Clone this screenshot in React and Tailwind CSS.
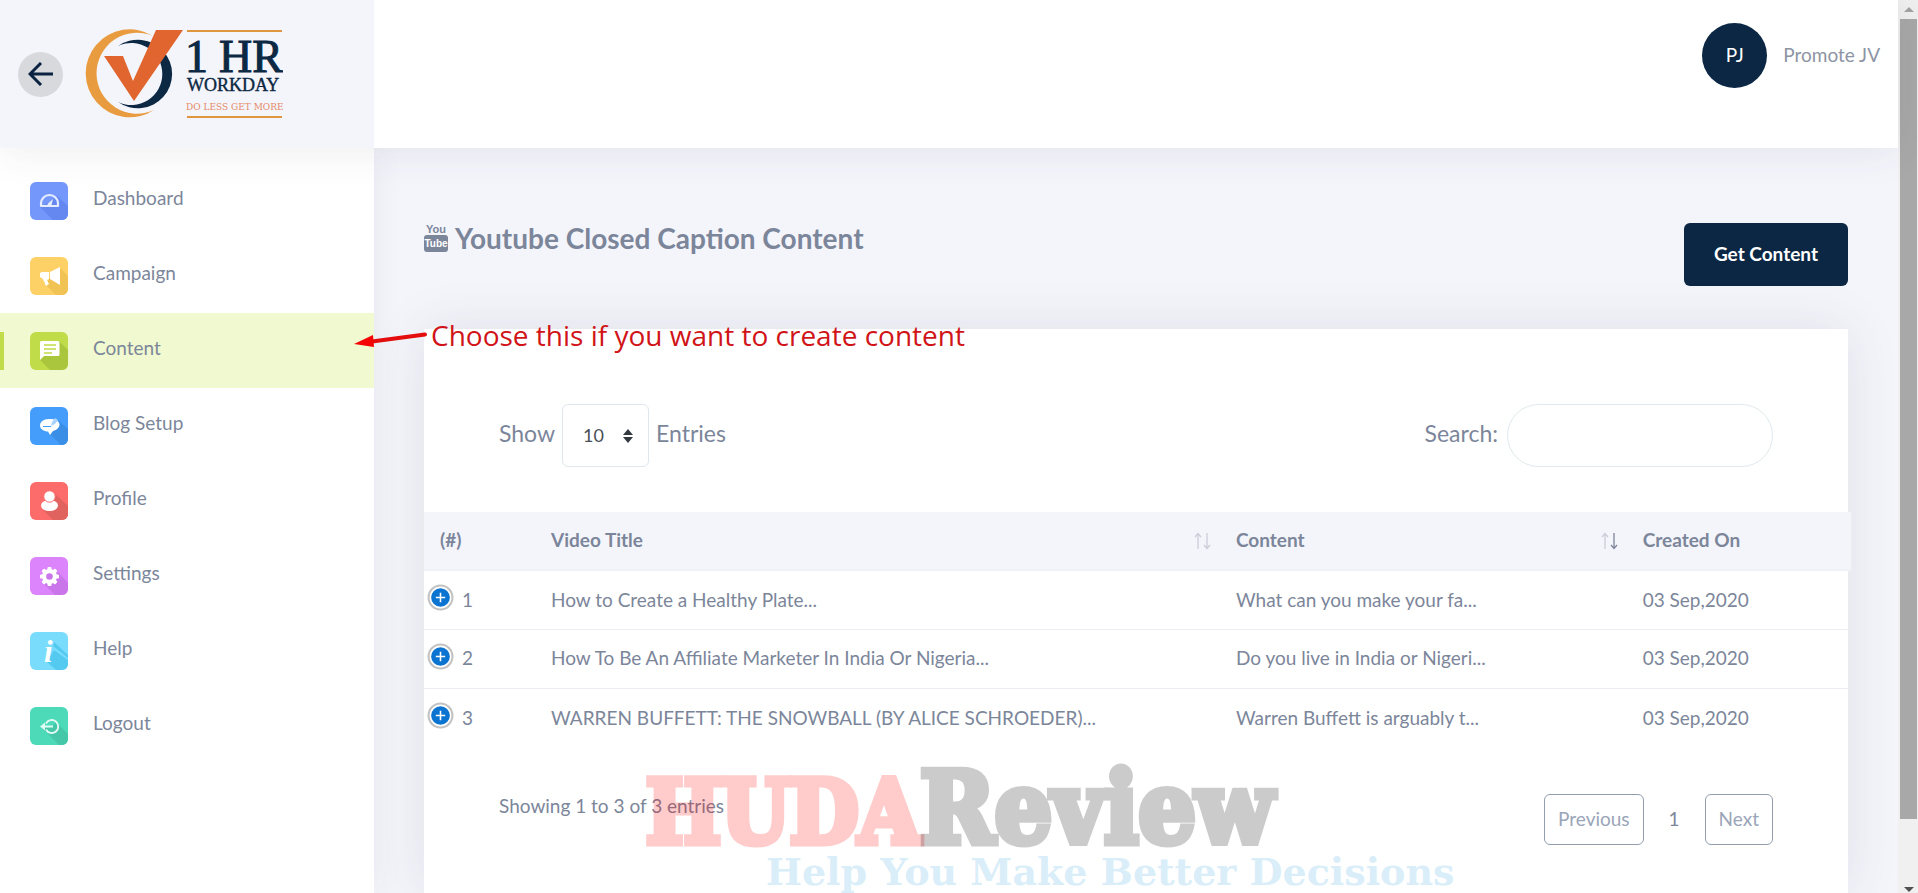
import React, { useState } from 'react';

const Logo = () => (
  <svg viewBox="0 0 198 90" className="w-[198px] h-[90px]" role="img" aria-label="1 HR Workday">
    <path d="M68 7 A44 44 0 1 0 69 81 A40.5 40.5 0 1 1 68 7Z" fill="#e99c3f" />
    <path d="M33 17 A34.3 34.3 0 1 1 33 73 A31 31 0 1 0 33 17Z" fill="#0c2843" />
    <path d="M19 27H38L48 52L71 1H98L49 72Z" fill="#e0652f" />
    <path d="M102 2H197M102 88H197" stroke="#e0953f" strokeWidth="2" />
    <g fontFamily="'Liberation Serif', serif" fill="#0c2843" stroke="#0c2843">
      <text x="100" y="43" fontSize="46" strokeWidth="1">1</text>
      <text x="134" y="43" fontSize="46" strokeWidth="1">HR</text>
      <text x="102" y="62" fontSize="18" strokeWidth="0.4">WORKDAY</text>
    </g>
    <text x="101" y="81" fontSize="9" fontFamily="'DejaVu Serif', serif" fill="#e58a68">DO LESS GET MORE</text>
  </svg>
);

// Rounded tile with a long shadow falling to the bottom right
const Tile = ({ bg, shade, shadow, children }) => (
  <svg viewBox="0 0 38 38" className="w-[38px] h-[38px] rounded-md shrink-0" aria-hidden="true">
    <rect width="38" height="38" fill={bg} />
    <path d={shadow} fill={shade} />
    {children}
  </svg>
);

const navItems = [
  {
    label: 'Dashboard',
    icon: (
      <Tile bg="#7397fb" shade="#6488ef" shadow="M10 25L23 38H38V24L27 14L20 20Z">
        <path d="M11 24V21.500A8.500 8.500 0 0 1 28 21.500V24Z" fill="none" stroke="#e6ecff" strokeWidth="2.200" strokeLinejoin="round" />
        <path d="M23 17L21.500 23A2 2 0 1 1 18.500 21Z" fill="#e6ecff" />
      </Tile>
    ),
  },
  {
    label: 'Campaign',
    icon: (
      <Tile bg="#fed166" shade="#f1c254" shadow="M16 28L26 38H38V19L29.500 10.500V27L20 20Z">
        <path d="M10 16L12 15H19V22L17 23L19 27L16 29L13 22L10 20Z" fill="#fff" />
        <path d="M20 15L30 10V28L20 22Z" fill="#fff" />
      </Tile>
    ),
  },
  {
    label: 'Content',
    icon: (
      <Tile bg="#c0dc48" shade="#aac63d" shadow="M10 28L20 38H38V18L29 9V24H14Z">
        <path d="M11.500 9H28A1.500 1.500 0 0 1 29.500 10.500V22.500A1.500 1.500 0 0 1 28 24H14L10 28V10.500A1.500 1.500 0 0 1 11.500 9Z" fill="#fff" />
        <path d="M14 13H26M14 17H26M14 21H22" stroke="#c0dc48" strokeWidth="1.400" />
      </Tile>
    ),
  },
  {
    label: 'Blog Setup',
    icon: (
      <Tile bg="#449dfb" shade="#3a8ee6" shadow="M20 27L31 38H38V22L29 14L24 23Z">
        <path d="M19 12C13 12 10 15 10 18.500S14 24.500 18 24.500L20 28L23 24C27 23 29.500 20.500 29.500 17.500C29.500 14 25 12 19 12Z" fill="#fff" />
        <path d="M13 19.500H21" stroke="#449dfb" strokeWidth="1.200" />
        <path d="M21 19L22 15L25 11L28 13L25 17Z" fill="#a9d2ff" />
      </Tile>
    ),
  },
  {
    label: 'Profile',
    icon: (
      <Tile bg="#fc6c6a" shade="#e06360" shadow="M13 28L23 38H38V24L25 12L20 20Z">
        <ellipse cx="19.500" cy="23.500" rx="8.500" ry="5.500" fill="#fff" />
        <circle cx="19.500" cy="14.500" r="5.700" fill="#fff" stroke="#fc6c6a" strokeWidth="1" />
      </Tile>
    ),
  },
  {
    label: 'Settings',
    icon: (
      <Tile bg="#dc84fb" shade="#ca76ea" shadow="M13 26L25 38H38V26L27 14L20 20Z">
        <circle cx="19.500" cy="19.500" r="7.400" fill="#fff" />
        <g fill="#fff">
          <rect x="17.500" y="10" width="4" height="19" rx="1" />
          <rect x="17.500" y="10" width="4" height="19" rx="1" transform="rotate(45 19.500 19.500)" />
          <rect x="17.500" y="10" width="4" height="19" rx="1" transform="rotate(90 19.500 19.500)" />
          <rect x="17.500" y="10" width="4" height="19" rx="1" transform="rotate(135 19.500 19.500)" />
        </g>
        <circle cx="19.500" cy="19.500" r="3.300" fill="#ca76ea" />
      </Tile>
    ),
  },
  {
    label: 'Help',
    icon: (
      <Tile bg="#79dcfd" shade="#55caf1" shadow="M17 30L26 38H38V28L24 18ZM24 10L38 23V26L23 14Z">
        <text x="14" y="30" fontSize="31" fontWeight="700" fontStyle="italic" fontFamily="'Liberation Serif', serif" fill="#fff">i</text>
      </Tile>
    ),
  },
  {
    label: 'Logout',
    icon: (
      <Tile bg="#4cdab9" shade="#45c7a8" shadow="M12 21L29 38H38V27L26 15L22 20Z">
        <path d="M16 16.500A6.500 6.500 0 1 1 16 22.500M13 19.500H23" fill="none" stroke="#e2faf4" strokeWidth="1.900" />
        <path d="M10 19.500L15 15.500V23.500Z" fill="#e2faf4" />
      </Tile>
    ),
  },
];

const rows = [
  { id: 1, title: 'How to Create a Healthy Plate...', content: 'What can you make your fa...', created: '03 Sep,2020' },
  { id: 2, title: 'How To Be An Affiliate Marketer In India Or Nigeria...', content: 'Do you live in India or Nigeri...', created: '03 Sep,2020' },
  { id: 3, title: 'WARREN BUFFETT: THE SNOWBALL (BY ALICE SCHROEDER)...', content: 'Warren Buffett is arguably t...', created: '03 Sep,2020' },
];

const SortArrows = ({ desc }) => (
  <svg viewBox="0 0 18 18" className="w-[18px] h-[18px]" fill="none" stroke="#7d8597" strokeWidth="1.300" aria-hidden="true">
    <path d="M4 17V2M1 5L4 1.500L7 5" opacity="0.35" />
    <path d="M13 1V16M10 13L13 16.500L16 13" opacity={desc ? 1 : 0.35} />
  </svg>
);

const YoutubeMark = () => (
  <svg viewBox="0 0 24 30" className="w-6 h-[30px]" fontFamily="'Liberation Sans Narrow', 'Liberation Sans', sans-serif" aria-hidden="true">
    <text x="12" y="10" fontSize="11" textAnchor="middle" fill="#7c869a">You</text>
    <rect y="12" width="24" height="17" rx="3" fill="#7c869a" />
    <text x="12" y="24" fontSize="10" textAnchor="middle" fill="#fff">Tube</text>
  </svg>
);

const Scrollbar = () => (
  <div className="w-5 shrink-0 flex flex-col bg-[#f0f0f0] pl-0.5 pr-px" aria-hidden="true">
    <div className="h-[19px] flex items-center justify-center">
      <svg viewBox="0 0 10 5" className="w-2.5 h-[5px]"><path d="M0 5L5 0L10 5Z" fill="#a3a3a3" /></svg>
    </div>
    <div className="grow-[16] basis-0 bg-[#a8a8a8]" />
    <div className="grow basis-0" />
    <div className="h-6 flex items-end justify-center pb-px">
      <svg viewBox="0 0 10 5" className="w-2.5 h-[5px]"><path d="M0 0L5 5L10 0Z" fill="#505050" /></svg>
    </div>
  </div>
);

const App = () => {
  const [active, setActive] = useState('Content');
  const [pageSize, setPageSize] = useState('10');
  const [query, setQuery] = useState('');

  const visible = rows.filter((r) => r.title.toLowerCase().includes(query.toLowerCase()));

  return (
    <div className="flex h-screen overflow-hidden bg-[#f4f5fb] text-[#7c869a] text-[19px] font-['Lato',sans-serif]">
      <div className="relative flex-1 min-w-0 flex flex-col">

        {/* Top bar */}
        <header className="relative z-10 h-[148px] shrink-0 flex bg-white shadow-[0_0_40px_0_rgba(60,60,75,0.1)]">
          <div className="w-[374px] shrink-0 bg-[#f4f5fb] flex items-center pl-[18px] gap-[22px]">
            <button type="button" aria-label="Back" className="w-[45px] h-[45px] rounded-full bg-[#d7d9dd] flex items-center justify-center">
              <svg viewBox="0 0 26 24" className="w-[26px] h-6" fill="none" stroke="#0b2340" strokeWidth="3" aria-hidden="true">
                <path d="M25 12H3M13 1L2 12L13 23" />
              </svg>
            </button>
            <a href="#home"><Logo /></a>
          </div>
          <div className="flex-1 flex justify-end items-start pt-[23px] pr-[18px]">
            <div className="flex items-center gap-4">
              <span className="w-[65px] h-[65px] rounded-full bg-[#0b2744] text-white flex items-center justify-center">PJ</span>
              <span className="text-[#8d94a3]">Promote JV</span>
            </div>
          </div>
        </header>

        <div className="flex-1 min-h-0 flex">
          {/* Sidebar */}
          <nav className="w-[374px] shrink-0 bg-white pt-[15px] shadow-[0_0_30px_0_rgba(60,60,75,0.07)]">
            {navItems.map((item) => (
              <a
                key={item.label}
                href={`#${item.label}`}
                onClick={() => setActive(item.label)}
                className={`relative h-[75px] flex items-center gap-[25px] pl-[30px] ${active === item.label ? 'bg-[#f0f9cf]' : ''}`}
              >
                {active === item.label && <span className="absolute left-0 w-1 h-[38px] bg-[#c0dc48]" />}
                {item.icon}
                <span className="pb-1">{item.label}</span>
              </a>
            ))}
          </nav>

          {/* Page */}
          <main className="flex-1 min-w-0 flex flex-col px-[50px] pt-[75px]">
            <div className="flex justify-between items-start mb-[43px]">
              <h1 className="flex items-center gap-[7px] text-[28px] leading-7 font-bold">
                <YoutubeMark />
                Youtube Closed Caption Content
              </h1>
              <button type="button" className="h-[63px] px-[30px] rounded-md bg-[#0b2744] text-white font-bold">Get Content</button>
            </div>

            <section className="flex-1 bg-white pt-[75px] shadow-[0_0_50px_0_rgba(60,60,75,0.11)]">
              <div className="flex justify-between px-[75px] text-[23px]">
                <div className="flex items-center gap-[7px]">
                  <label htmlFor="size" className="pb-1">Show</label>
                  <div className="relative">
                    <select
                      id="size"
                      value={pageSize}
                      onChange={(e) => setPageSize(e.target.value)}
                      className="appearance-none w-[87px] h-[63px] pl-5 rounded-md border border-[#dfe7ee] bg-white text-[18px] text-[#495057]"
                    >
                      <option>10</option>
                      <option>25</option>
                      <option>50</option>
                    </select>
                    <svg viewBox="0 0 10 14" className="absolute right-4 top-[25px] w-2.5 h-3.5 pointer-events-none" fill="#343a40" aria-hidden="true">
                      <path d="M0 6L5 0L10 6ZM0 8L5 14L10 8Z" />
                    </svg>
                  </div>
                  <span className="pb-1">Entries</span>
                </div>
                <div className="flex items-center gap-[9px]">
                  <label htmlFor="search" className="pb-1">Search:</label>
                  <input
                    id="search"
                    type="search"
                    value={query}
                    onChange={(e) => setQuery(e.target.value)}
                    className="w-[266px] h-[63px] px-6 rounded-full border border-[#e0e9ee] bg-white text-[18px]"
                  />
                </div>
              </div>

              <div className="mt-[45px] -mr-[3px]">
                <table className="w-full table-fixed text-left">
                  <thead>
                    <tr className="h-[58px] bg-[#f4f5fb] border-b-2 border-[#eff1f7]">
                      <th className="w-[111px] pl-4">(#)</th>
                      <th className="w-[48%] pl-4 pr-2">
                        <div className="flex justify-between items-center">Video Title <SortArrows /></div>
                      </th>
                      <th className="w-[28.5%] pl-4 pr-2">
                        <div className="flex justify-between items-center">Content <SortArrows desc /></div>
                      </th>
                      <th className="pl-4">Created On</th>
                    </tr>
                  </thead>
                  <tbody>
                    {visible.map((row) => (
                      <tr key={row.id} className="h-[59px] border-b border-[#ebedf2] last:border-b-0">
                        <td className="pl-[3px]">
                          <div className="flex items-center gap-2">
                            <button type="button" aria-label={`Expand row ${row.id}`} className="w-[27px] h-[27px] mb-1 rounded-full">
                              <svg viewBox="0 0 26 26" aria-hidden="true">
                                <circle cx="13" cy="13" r="11.500" fill="#fff" stroke="#c2c2c2" strokeWidth="2" />
                                <circle cx="13" cy="13" r="9" fill="#0b74d1" />
                                <path d="M13 8.500V17.500M8.500 13H17.500" stroke="#fff" strokeWidth="1.500" />
                              </svg>
                            </button>
                            {row.id}
                          </div>
                        </td>
                        <td className="pl-4">{row.title}</td>
                        <td className="pl-4">{row.content}</td>
                        <td className="pl-4">{row.created}</td>
                      </tr>
                    ))}
                  </tbody>
                </table>
              </div>

              <div className="flex justify-between items-start px-[75px] mt-[47px]">
                <p className="leading-6">Showing 1 to {visible.length} of {rows.length} entries</p>
                <div className="flex items-center text-[#9aa5b8]">
                  <button type="button" className="h-[51px] px-[13px] rounded-md border border-[#929eae]">Previous</button>
                  <button type="button" className="w-[61px] text-[#7c869a]">1</button>
                  <button type="button" className="h-[51px] px-[13px] rounded-md border border-[#929eae]">Next</button>
                </div>
              </div>
            </section>
          </main>
        </div>

        {/* Callout over the page */}
        <div className="absolute z-20 left-[354px] top-[317px] flex items-start pointer-events-none">
          <svg viewBox="0 0 74 32" className="w-[74px] h-8" aria-hidden="true">
            <path d="M18 24.500L71 17.500" stroke="#e30d0d" strokeWidth="4" strokeLinecap="round" />
            <path d="M0 27L19 18L20 30Z" fill="#f40404" />
          </svg>
          <span className="pl-[3px] text-[28px] leading-9 text-[#d01418] font-['Open_Sans',sans-serif]">Choose this if you want to create content</span>
        </div>

        {/* Watermark */}
        <div className="absolute z-20 left-[646px] top-[764px] pointer-events-none whitespace-nowrap font-bold font-['DejaVu_Serif_Condensed','DejaVu_Serif',serif]">
          <div className="flex items-baseline leading-[88px]">
            <span className="text-[88px] text-[#ff0000] [-webkit-text-stroke:7px_#ff0000] opacity-20">HUDA</span>
            <span className="text-[100px] text-black [-webkit-text-stroke:7px_#000] opacity-20">Review</span>
          </div>
          <div className="pl-[120px] text-[38px] leading-8 text-[#d9eef9] font-['DejaVu_Serif',serif]">Help You Make Better Decisions</div>
        </div>
      </div>

      <Scrollbar />
    </div>
  );
};

export default App;
